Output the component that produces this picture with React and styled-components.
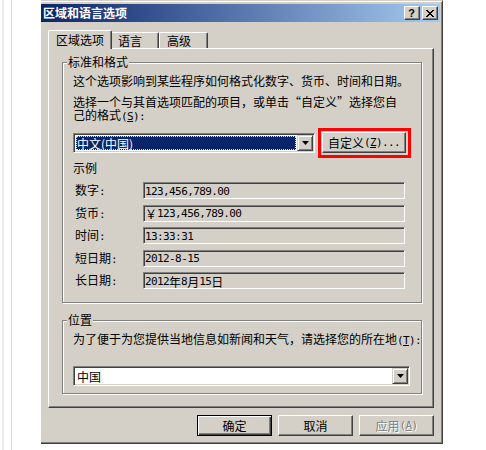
import React from 'react';
import styled, { createGlobalStyle, css } from 'styled-components';

const FACE = '#d4d0c8';
const SHADOW = '#808080';
const DARK = '#404040';
const CJK = `"Noto Sans CJK SC", "Noto Sans", sans-serif`;
const MONO = `"DejaVu Sans Mono", "Liberation Mono", monospace`;

const GlobalStyle = createGlobalStyle`
  *, *::before, *::after { box-sizing: border-box; }
  html, body { margin: 0; padding: 0; background: #fff; }
  body { font-family: ${CJK}; font-size: 12px; line-height: 13px; color: #000; }
`;

const Page = styled.div`
  display: flex;
  width: 486px;
  height: 450px;
  overflow: hidden;
  background: #fff;
`;

const Gutter = styled.div`
  width: 41px;
  flex-shrink: 0;
  background: linear-gradient(
    to right,
    transparent 2px, #ebebeb 2px, #ebebeb 4px, transparent 4px,
    transparent 11px, #d8d8d8 11px, #d8d8d8 12px, transparent 12px
  );
`;

const Dialog = styled.div`
  width: 402px;
  height: 444px;
  flex-shrink: 0;
  display: flex;
  flex-direction: column;
  background: ${FACE};
  border-top: 1px solid ${FACE};
  border-right: 1px solid ${DARK};
  border-bottom: 1px solid ${DARK};
  box-shadow: inset 0 1px 0 #fff, inset -1px -1px 0 ${SHADOW};
  padding: 3px 2px 0 0;
`;

const TitleBar = styled.div`
  height: 18px;
  display: flex;
  align-items: center;
  justify-content: space-between;
  padding: 0 2px;
  background: linear-gradient(to right, #0a246a, #a6caf0);
`;

const TitleText = styled.span`
  color: #fff;
  font-weight: 700;
  font-size: 12px;
  line-height: 18px;
  white-space: nowrap;
`;

const CaptionButtons = styled.div`
  display: flex;
  gap: 2px;
`;

const CaptionButton = styled.div`
  width: 16px;
  height: 14px;
  display: flex;
  align-items: center;
  justify-content: center;
  background: ${FACE};
  border: 1px solid;
  border-color: #fff ${DARK} ${DARK} #fff;
  box-shadow: inset -1px -1px 0 ${SHADOW};
  font-family: "Liberation Sans", sans-serif;
  font-weight: 700;
  font-size: 11px;
  line-height: 12px;
  color: #000;
  padding-right: 1px;
`;

const Body = styled.div`
  flex: 1;
  display: flex;
  flex-direction: column;
  padding: 8px 6px 0 7px;
`;

const TabStrip = styled.div`
  height: 18px;
  display: flex;
  align-items: flex-end;
  position: relative;
  z-index: 1;
`;

const Tab = styled.div`
  position: relative;
  min-width: 49px;
  padding: 1px 7px 0;
  height: 16px;
  line-height: 14px;
  background: ${FACE};
  border-top: 1px solid #fff;
  border-left: 1px solid #fff;
  border-right: 1px solid ${DARK};
  border-radius: 2px 2px 0 0;
  box-shadow: inset -1px 0 0 ${SHADOW};
  white-space: nowrap;
  z-index: 1;
  ${(p) =>
    p.$active &&
    css`
      height: 19px;
      padding-top: 0;
      line-height: 17px;
      margin-bottom: -1px;
      margin-right: -2px;
      z-index: 2;
    `}
`;

const Panel = styled.div`
  height: 360px;
  display: flex;
  flex-direction: column;
  gap: 10px;
  background: ${FACE};
  border-top: 1px solid #fff;
  border-left: 1px solid #fff;
  border-right: 1px solid ${DARK};
  border-bottom: 1px solid ${DARK};
  box-shadow: inset -1px -1px 0 ${SHADOW};
  padding: 6px 11px 0 13px;
`;

const Group = styled.fieldset`
  margin: 0;
  min-width: 0;
  border: 1px solid ${SHADOW};
  box-shadow: inset 1px 1px 0 #fff, 1px 1px 0 #fff;
  padding: 5px 10px ${(p) => p.$padBottom}px 10px;
`;

const GroupTitle = styled.legend`
  margin-left: -6px;
  padding: 0 1px;
  background: ${FACE};
  font-size: 12px;
  line-height: 14px;
`;

const Para = styled.div`
  line-height: 13px;
  white-space: nowrap;
  margin-top: ${(p) => p.$mt || 0}px;
`;

const Half = styled.span`
  font-family: ${MONO};
  font-size: 11px;
  letter-spacing: -0.6px;
`;

const Quote = styled.span`
  font-feature-settings: "fwid" 1;
`;

const Cjk = styled.span`
  font-family: ${CJK};
  font-size: 12px;
  letter-spacing: 0;
`;

const ComboRow = styled.div`
  display: flex;
  align-items: center;
  margin-top: 5px;
`;

const Combo = styled.div`
  width: ${(p) => p.$w}px;
  height: 20px;
  display: flex;
  background: #fff;
  border: 1px solid;
  border-color: ${SHADOW} #fff #fff ${SHADOW};
  box-shadow: inset 1px 1px 0 ${DARK}, inset -1px -1px 0 ${FACE};
  padding: 1px;
  margin-top: ${(p) => p.$mt || 0}px;
`;

const ComboValue = styled.div`
  flex: 1;
  display: flex;
  align-items: center;
  margin: 1px;
  padding: 0 1px;
  line-height: 13px;
  white-space: nowrap;
  ${(p) =>
    p.$selected &&
    css`
      background: #0a246a;
      color: #fff;
      outline: 1px dotted #e6e6a0;
      outline-offset: -1px;
    `}
`;

const DropButton = styled.div`
  width: 16px;
  height: 16px;
  flex-shrink: 0;
  display: flex;
  align-items: center;
  justify-content: center;
  background: ${FACE};
  border: 1px solid;
  border-color: ${FACE} ${DARK} ${DARK} ${FACE};
  box-shadow: inset 1px 1px 0 #fff, inset -1px -1px 0 ${SHADOW};
`;

const Highlight = styled.div`
  margin-left: 3px;
  border: 3px solid #ff0000;
  padding: 1px 2px 2px 1px;
`;

const Button = styled.button`
  width: ${(p) => p.$w || 75}px;
  height: 21px;
  margin: 0;
  padding: 0;
  display: flex;
  align-items: center;
  justify-content: center;
  font-family: ${CJK};
  font-size: 12px;
  line-height: 13px;
  color: #000;
  background: ${FACE};
  border: 1px solid;
  border-color: #fff ${DARK} ${DARK} #fff;
  box-shadow: inset -1px -1px 0 ${SHADOW};
  white-space: nowrap;
  ${(p) =>
    p.$default &&
    css`
      border-color: #000;
      box-shadow: inset 1px 1px 0 #fff, inset -1px -1px 0 ${DARK}, inset -2px -2px 0 ${SHADOW};
    `}
  &:disabled {
    color: ${SHADOW};
    text-shadow: 1px 1px 0 #fff;
  }
`;

const SampleHeading = styled.div`
  margin-top: 3px;
  line-height: 13px;
`;

const SampleGrid = styled.div`
  margin: 8px 0 0 2px;
  display: grid;
  grid-template-columns: 68px 262px;
  grid-auto-rows: 17px;
  row-gap: 5.5px;
  align-items: center;
`;

const SampleLabel = styled.div`
  line-height: 13px;
  white-space: nowrap;
`;

const Field = styled.div`
  height: 17px;
  display: flex;
  align-items: center;
  background: ${FACE};
  border: 1px solid;
  border-color: ${SHADOW} #fff #fff ${SHADOW};
  box-shadow: inset 1px 1px 0 ${DARK};
  padding: 1px 0 0 1px;
  font-family: ${MONO};
  font-size: 11px;
  letter-spacing: -0.6px;
  white-space: nowrap;
`;

const ButtonRow = styled.div`
  display: flex;
  justify-content: flex-end;
  gap: 6px;
  margin-top: 7px;
`;

const DownArrow = () => (
  <svg width="7" height="4" viewBox="0 0 7 4">
    <path d="M0 0h7L3.5 4z" fill="#000" />
  </svg>
);

const CloseGlyph = () => (
  <svg width="8" height="7" viewBox="0 0 8 7" shapeRendering="crispEdges">
    <path d="M0 0h2l2 2.4L6 0h2L5 3.5 8 7H6L4 4.6 2 7H0l3-3.5z" fill="#000" />
  </svg>
);

const samples = [
  { label: '数字', value: '123,456,789.00' },
  { label: '货币', value: <><Cjk>￥</Cjk>123,456,789.00</> },
  { label: '时间', value: '13:33:31' },
  { label: '短日期', value: '2012-8-15' },
  { label: '长日期', value: <>2012<Cjk>年</Cjk>8<Cjk>月</Cjk>15<Cjk>日</Cjk></> },
];

export default function App() {
  return (
    <>
      <GlobalStyle />
      <Page>
        <Gutter />
        <Dialog>
          <TitleBar>
            <TitleText>区域和语言选项</TitleText>
            <CaptionButtons>
              <CaptionButton>?</CaptionButton>
              <CaptionButton>
                <CloseGlyph />
              </CaptionButton>
            </CaptionButtons>
          </TitleBar>
          <Body>
            <TabStrip>
              <Tab $active>区域选项</Tab>
              <Tab>语言</Tab>
              <Tab>高级</Tab>
            </TabStrip>
            <Panel>
              <Group $padBottom={13}>
                <GroupTitle>标准和格式</GroupTitle>
                <Para>这个选项影响到某些程序如何格式化数字、货币、时间和日期。</Para>
                <Para $mt={8}>
                  选择一个与其首选项匹配的项目，或单击<Quote>“</Quote>自定义<Quote>”</Quote>选择您自
                  <br />
                  己的格式<Half>(<u>S</u>):</Half>
                </Para>
                <ComboRow>
                  <Combo $w={250}>
                    <ComboValue $selected>中文(中国)</ComboValue>
                    <DropButton>
                      <DownArrow />
                    </DropButton>
                  </Combo>
                  <Highlight>
                    <Button $w={84}>
                      自定义<Half>(<u>Z</u>)...</Half>
                    </Button>
                  </Highlight>
                </ComboRow>
                <SampleHeading>示例</SampleHeading>
                <SampleGrid>
                  {samples.map((s) => (
                    <React.Fragment key={s.label}>
                      <SampleLabel>
                        {s.label}
                        <Half>:</Half>
                      </SampleLabel>
                      <Field>{s.value}</Field>
                    </React.Fragment>
                  ))}
                </SampleGrid>
              </Group>
              <Group $padBottom={7}>
                <GroupTitle>位置</GroupTitle>
                <Para>
                  为了便于为您提供当地信息如新闻和天气，请选择您的所在地<Half>(<u>T</u>):</Half>
                </Para>
                <Combo $w={337} $mt={19}>
                  <ComboValue>中国</ComboValue>
                  <DropButton>
                    <DownArrow />
                  </DropButton>
                </Combo>
              </Group>
            </Panel>
            <ButtonRow>
              <Button $default>确定</Button>
              <Button>取消</Button>
              <Button disabled>
                应用<Half>(<u>A</u>)</Half>
              </Button>
            </ButtonRow>
          </Body>
        </Dialog>
      </Page>
    </>
  );
}
